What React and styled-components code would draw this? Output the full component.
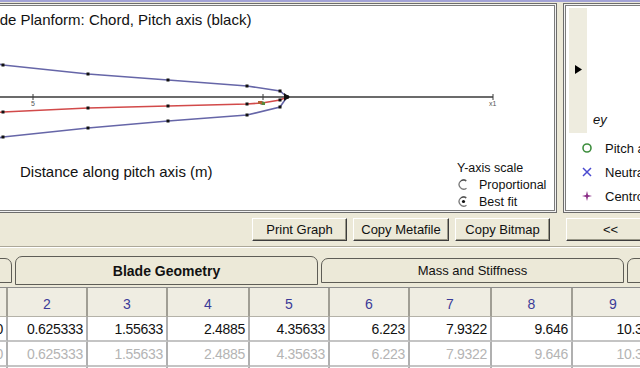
import React from 'react';
import styled, { createGlobalStyle } from 'styled-components';

const GlobalStyle = createGlobalStyle`
  body {
    margin: 0;
    background: #ece9d8;
  }
`;

const COLUMNS = [
  { label: '1', value: '0', width: 81 },
  { label: '2', value: '0.625333', width: 80 },
  { label: '3', value: '1.55633', width: 80 },
  { label: '4', value: '2.4885', width: 82 },
  { label: '5', value: '4.35633', width: 80 },
  { label: '6', value: '6.223', width: 80 },
  { label: '7', value: '7.9322', width: 82 },
  { label: '8', value: '9.646', width: 81 },
  { label: '9', value: '10.37', width: 82 },
];

const UPPER = [[-7, 63], [3, 65], [88, 74], [168, 80], [247, 86], [280, 91], [287, 97]];
const LOWER = [[-7, 139], [3, 137], [88, 128], [168, 121], [247, 115], [280, 107], [287, 97]];
const PITCH = [[-7, 113], [3, 112], [88, 108], [168, 106], [247, 104], [262, 103], [280, 100], [287, 97]];

const pts = list => list.map(p => p.join(',')).join(' ');

export default function App() {
  return (
    <>
      <GlobalStyle />
      <Root>
        <TopEdge />
        <Upper>
          <LeftCol>
            <GraphPanel>
              <Title>Blade Planform: Chord, Pitch axis (black)</Title>
              <PlanformChart />
              <ChartFooter>
                <AxisLabel>Distance along pitch axis (m)</AxisLabel>
                <ScaleBox>
                  <ScaleLine>Y-axis scale</ScaleLine>
                  <ScaleLine>
                    <Radio />
                    Proportional
                  </ScaleLine>
                  <ScaleLine>
                    <Radio checked />
                    Best fit
                  </ScaleLine>
                </ScaleBox>
              </ChartFooter>
            </GraphPanel>
            <ButtonRow>
              <Button>Print Graph</Button>
              <Button $wide>Copy Metafile</Button>
              <Button>Copy Bitmap</Button>
            </ButtonRow>
          </LeftCol>

          <RightCol>
            <SidePanel>
              <KeyBlock>
                <RowHeader>
                  <svg width="7" height="9" viewBox="0 0 7 9">
                    <path d="M0 0 L7 4.5 L0 9 Z" fill="#000" />
                  </svg>
                </RowHeader>
                <KeyCell>ey</KeyCell>
              </KeyBlock>
              <Legend>
                <LegendItem>
                  <Mark>
                    <svg width="12" height="12" viewBox="0 0 12 12">
                      <circle cx="6" cy="6" r="4" fill="none" stroke="#3e8e3e" strokeWidth="1.6" />
                    </svg>
                  </Mark>
                  Pitch axis
                </LegendItem>
                <LegendItem>
                  <Mark>
                    <svg width="12" height="12" viewBox="0 0 12 12">
                      <path d="M2 2 L10 10 M10 2 L2 10" stroke="#4a4ad0" strokeWidth="1.5" />
                    </svg>
                  </Mark>
                  Neutral axis
                </LegendItem>
                <LegendItem>
                  <Mark>
                    <svg width="12" height="12" viewBox="0 0 12 12">
                      <path d="M6 1 L7 5 L11 6 L7 7 L6 11 L5 7 L1 6 L5 5 Z" fill="#8a2d86" />
                    </svg>
                  </Mark>
                  Centroid
                </LegendItem>
              </Legend>
            </SidePanel>
            <SideButtonRow>
              <Button $fill>&lt;&lt;</Button>
            </SideButtonRow>
          </RightCol>
        </Upper>

        <Separator />

        <TabRow>
          <Tab>Aerodynamics</Tab>
          <Tab $active>Blade Geometry</Tab>
          <Tab>Mass and Stiffness</Tab>
          <Tab>Other</Tab>
        </TabRow>

        <Grid>
          <GridRow>
            {COLUMNS.map(c => (
              <HeadCell key={c.label} style={{ width: c.width }}>
                {c.label}
              </HeadCell>
            ))}
          </GridRow>
          <GridRow>
            {COLUMNS.map(c => (
              <Cell key={c.label} style={{ width: c.width }}>
                {c.value}
              </Cell>
            ))}
          </GridRow>
          <GridRow>
            {COLUMNS.map(c => (
              <Cell key={c.label} $muted style={{ width: c.width }}>
                {c.value}
              </Cell>
            ))}
          </GridRow>
          <GridRow>
            {COLUMNS.map(c => (
              <Cell key={c.label} style={{ width: c.width }} />
            ))}
          </GridRow>
        </Grid>
      </Root>
    </>
  );
}

function PlanformChart() {
  return (
    <ChartSvg width="561" height="121" viewBox="-7 29 561 121">
      <line x1="-7" y1="97" x2="493" y2="97" stroke="#3a3a3a" strokeWidth="1.6" />
      <line x1="33" y1="94" x2="33" y2="100" stroke="#3a3a3a" />
      <text x="31" y="106" fontSize="7" fill="#555" fontFamily="Liberation Sans, sans-serif">5</text>
      <line x1="263" y1="94" x2="263" y2="100" stroke="#3a3a3a" />
      <line x1="493" y1="94" x2="493" y2="100" stroke="#3a3a3a" />
      <text x="489" y="106" fontSize="7" fill="#555" fontFamily="Liberation Sans, sans-serif">x1</text>

      <polyline points={pts(UPPER)} fill="none" stroke="#6666a8" strokeWidth="1.6" />
      <polyline points={pts(LOWER)} fill="none" stroke="#6666a8" strokeWidth="1.6" />
      <polyline points={pts(PITCH)} fill="none" stroke="#d24a4a" strokeWidth="1.6" />

      {[...UPPER, ...LOWER, ...PITCH]
        .filter(p => p[0] > 0)
        .map((p, i) => (
          <rect key={i} x={p[0] - 1.5} y={p[1] - 1.5} width="3" height="3" fill="#111" />
        ))}
      <rect x="258" y="101" width="4" height="3" fill="#b06030" />
      <rect x="262" y="102" width="3" height="3" fill="#5b8a3a" />
      <path d="M284 93 L290 97 L284 101 Z" fill="#111" />
    </ChartSvg>
  );
}

function Radio({ checked }) {
  return (
    <RadioMark>
      <svg width="11" height="11" viewBox="0 0 11 11">
        <path d="M8.5 1.8 A4.6 4.6 0 1 0 8.5 9.2" fill="none" stroke="#7a7a7a" strokeWidth="1.3" />
        <path d="M2.5 2.5 A3.6 3.6 0 0 1 8 2.2" fill="none" stroke="#404040" strokeWidth="1" />
        {checked && <circle cx="5.5" cy="5.5" r="1.6" fill="#111" />}
      </svg>
    </RadioMark>
  );
}

const Root = styled.div`
  width: 640px;
  height: 368px;
  overflow: hidden;
  background: #ece9d8;
  font-family: 'Liberation Sans', Arial, sans-serif;
  color: #111;
`;

const TopEdge = styled.div`
  height: 2px;
  margin-bottom: 1px;
  background: #a3a3d6;
`;

const Upper = styled.div`
  display: flex;
  align-items: flex-start;
`;

const LeftCol = styled.div`
  display: flex;
  flex-direction: column;
  flex: none;
  width: 567px;
  margin-left: -10px;
`;

const sunken = `
  box-sizing: border-box;
  border: 1px solid #6c6c6c;
  box-shadow: inset 0 0 0 1px #f2f2f2, inset 0 0 0 2px #7c7c7c;
  padding: 2px;
`;

const GraphPanel = styled.div`
  ${sunken}
  height: 210px;
  background: #fff;
  display: flex;
  flex-direction: column;
  overflow: hidden;
`;

const Title = styled.div`
  margin: 5px 0 0 -15px;
  height: 18px;
  line-height: 18px;
  font-size: 15px;
  white-space: nowrap;
`;

const ChartSvg = styled.svg`
  display: block;
  flex: none;
`;

const ChartFooter = styled.div`
  display: flex;
  align-items: flex-start;
  flex: 1;
`;

const AxisLabel = styled.div`
  margin: 13px 0 0 27px;
  line-height: 18px;
  font-size: 15px;
  white-space: nowrap;
`;

const ScaleBox = styled.div`
  margin: 9px 0 0 auto;
  width: 97px;
  display: flex;
  flex-direction: column;
  font-size: 12.5px;
`;

const ScaleLine = styled.div`
  display: flex;
  align-items: center;
  height: 17px;
  white-space: nowrap;
`;

const RadioMark = styled.span`
  display: inline-flex;
  width: 22px;
  padding-left: 1px;
  box-sizing: border-box;
`;

const ButtonRow = styled.div`
  display: flex;
  justify-content: flex-end;
  gap: 6px;
  margin-top: 5px;
  padding-right: 7px;
`;

const Button = styled.button`
  box-sizing: border-box;
  height: 23px;
  width: ${p => (p.$fill ? '100%' : p.$wide ? '96px' : '95px')};
  padding: 0;
  background: #ece9d8;
  border: 1px solid;
  border-color: #fff #3c3c3c #3c3c3c #fff;
  box-shadow: inset -1px -1px 0 #9a9888;
  font-family: 'Liberation Sans', Arial, sans-serif;
  font-size: 13px;
  color: #111;
`;

const RightCol = styled.div`
  display: flex;
  flex-direction: column;
  flex: none;
  width: 92px;
  margin-left: 6px;
`;

const SidePanel = styled.div`
  ${sunken}
  height: 210px;
  padding: 4px 0 0 5px;
  background: #fff;
  display: flex;
  flex-direction: column;
  overflow: hidden;
`;

const KeyBlock = styled.div`
  display: flex;
  height: 125px;
  flex: none;
`;

const RowHeader = styled.div`
  width: 18px;
  background: #eeecdf;
  display: flex;
  align-items: center;
  justify-content: center;
  padding-bottom: 2px;
  box-sizing: border-box;
`;

const KeyCell = styled.div`
  display: flex;
  align-items: flex-end;
  padding: 0 0 6px 6px;
  font-size: 13px;
  font-style: italic;
`;

const Legend = styled.div`
  display: flex;
  flex-direction: column;
  padding-top: 3px;
`;

const LegendItem = styled.div`
  display: flex;
  align-items: center;
  height: 24px;
  font-size: 13px;
  white-space: nowrap;
`;

const Mark = styled.span`
  display: inline-flex;
  width: 24px;
  padding-left: 12px;
  box-sizing: border-box;
  margin-right: 12px;
`;

const SideButtonRow = styled.div`
  display: flex;
  margin-top: 5px;
  padding-left: 3px;
`;

const Separator = styled.div`
  margin-top: 5px;
  height: 1px;
  background: #aca899;
  border-bottom: 1px solid #fff;
`;

const TabRow = styled.div`
  display: flex;
  align-items: flex-start;
  gap: 3px;
  margin: 8px 0 0 -291px;
  height: 29px;
`;

const Tab = styled.div`
  flex: none;
  box-sizing: border-box;
  width: 303px;
  height: ${p => (p.$active ? '29px' : '25px')};
  margin-top: ${p => (p.$active ? '0' : '2px')};
  border: 1px solid #5e5d56;
  border-radius: 7px 7px 0 0;
  background: #ece9d8;
  display: flex;
  align-items: center;
  justify-content: center;
  font-size: ${p => (p.$active ? '14px' : '13px')};
  font-weight: ${p => (p.$active ? 700 : 400)};
  white-space: nowrap;
`;

const Grid = styled.div`
  margin: 2px 0 0 -73px;
  display: flex;
  flex-direction: column;
  border-top: 1px solid #8c8c8c;
`;

const GridRow = styled.div`
  display: flex;
  flex: none;
`;

const HeadCell = styled.div`
  flex: none;
  box-sizing: border-box;
  height: 29px;
  padding-top: 3px;
  background: #efede2;
  border-right: 2px solid #a09e94;
  border-bottom: 1px solid #b4b2a8;
  display: flex;
  align-items: center;
  justify-content: center;
  font-size: 14px;
  color: #3b3b98;
`;

const Cell = styled.div`
  flex: none;
  box-sizing: border-box;
  height: 25px;
  padding-right: 3px;
  background: #fff;
  border-right: 2px solid #b0b0b0;
  border-bottom: 2px solid #c4c4c4;
  display: flex;
  align-items: center;
  justify-content: flex-end;
  font-size: 14px;
  letter-spacing: -0.3px;
  color: ${p => (p.$muted ? '#b4b4b4' : '#111')};
`;
